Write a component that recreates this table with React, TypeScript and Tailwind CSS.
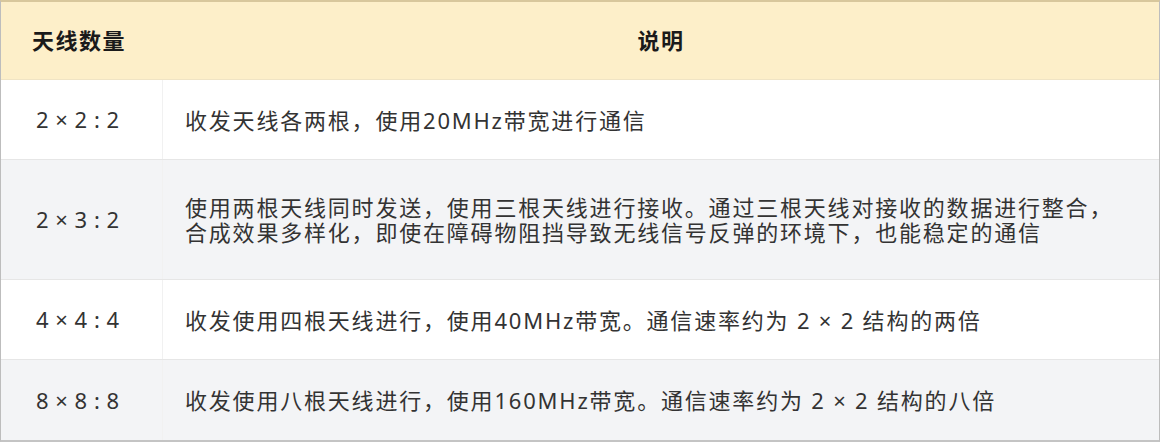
const rows = [
  { n: '2 × 2 : 2', lines: ['收发天线各两根，使用20MHz带宽进行通信'], h: 'h-[80px]', bg: 'bg-white' },
  {
    n: '2 × 3 : 2',
    lines: [
      '使用两根天线同时发送，使用三根天线进行接收。通过三根天线对接收的数据进行整合，',
      '合成效果多样化，即使在障碍物阻挡导致无线信号反弹的环境下，也能稳定的通信',
    ],
    h: 'h-[120px]',
    bg: 'bg-[#f3f4f6]',
  },
  { n: '4 × 4 : 4', lines: ['收发使用四根天线进行，使用40MHz带宽。通信速率约为 2 × 2 结构的两倍'], h: 'h-[80px]', bg: 'bg-white' },
  { n: '8 × 8 : 8', lines: ['收发使用八根天线进行，使用160MHz带宽。通信速率约为 2 × 2 结构的八倍'], h: 'h-[80px]', bg: 'bg-[#f3f4f6]' },
];

export default function App() {
  return (
    <div className="w-[1162px] h-[442px] bg-white font-['Noto_Sans','Noto_Sans_CJK_SC',sans-serif] text-[#333]">
      <div className="w-[1160px] border-t-2 border-t-[#d8c79c] border-x border-b-2 border-x-[#bdbdbd] border-b-[#c4c4c4]">
        <div className="grid grid-cols-[162px_1fr] h-[78px] bg-[#fdefc9] border-b border-[#f0e4c4] text-[22px] font-bold tracking-[1.5px] text-[#1a1a1a]">
          <div className="flex items-center pl-[31px]">天线数量</div>
          <div className="flex items-center justify-center">说明</div>
        </div>
        {rows.map((r, i) => (
          <div
            key={i}
            className={`grid grid-cols-[162px_1fr] ${r.h} ${r.bg} ${i < rows.length - 1 ? 'border-b border-[#e6e6e6]' : ''}`}
          >
            <div className="flex items-center pl-[35px] text-[22px] tracking-[0.5px] border-r border-[#f1f1f1]">{r.n}</div>
            <div className="flex flex-col justify-center gap-[1px] pl-[22px] text-[22px] leading-[24px] tracking-[1.8px]">
              {r.lines.map((l, j) => (
                <div key={j} className="whitespace-nowrap">{l}</div>
              ))}
            </div>
          </div>
        ))}
      </div>
    </div>
  );
}
